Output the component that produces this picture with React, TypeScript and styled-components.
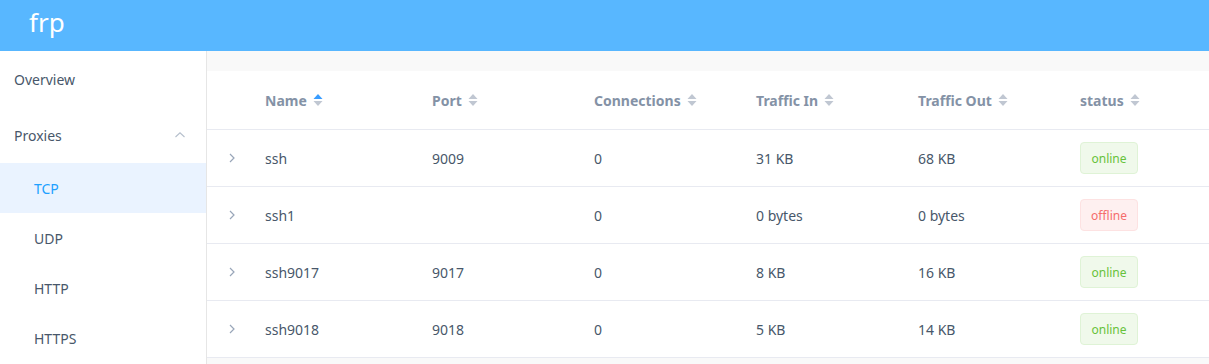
import styled, { createGlobalStyle } from "styled-components";

const GlobalStyle = createGlobalStyle`
  body {
    margin: 0;
    font-family: "Noto Sans", "Open Sans", sans-serif;
    background: #fff;
  }
`;

const Page = styled.div`
  width: 1209px;
  height: 364px;
  overflow: hidden;
  display: flex;
  flex-direction: column;
`;

const Header = styled.header`
  height: 51px;
  flex-shrink: 0;
  background: #58b7ff;
  display: flex;
  align-items: center;
  padding-left: 29px;
`;

const Logo = styled.span`
  color: #fff;
  font-size: 26px;
  line-height: 1;
  margin-top: -8px;
`;

const Body = styled.div`
  flex: 1;
  display: flex;
  min-height: 0;
`;

const Sidebar = styled.nav`
  width: 206px;
  flex-shrink: 0;
  border-right: 1px solid #e6e6e6;
  background: #fff;
`;

const MenuItem = styled.div<{ $sub?: boolean; $active?: boolean }>`
  height: ${(p) => (p.$sub ? "50px" : "56px")};
  display: flex;
  align-items: center;
  justify-content: space-between;
  padding: 0 20px 0 ${(p) => (p.$sub ? "34px" : "14px")};
  font-size: 14px;
  color: ${(p) => (p.$active ? "#20a0ff" : "#48576a")};
  background: ${(p) => (p.$active ? "#eaf3ff" : "transparent")};
`;

const Main = styled.main`
  flex: 1;
  background: #f9f9f9;
  padding-top: 20px;
`;

const Table = styled.div`
  background: #fff;
`;

const Row = styled.div<{ $head?: boolean }>`
  display: grid;
  grid-template-columns: 48px 167px 162px 162px 162px 162px 1fr;
  align-items: center;
  height: ${(p) => (p.$head ? "58px" : "56px")};
  border-bottom: 1px solid #e8eaf1;
  font-size: 14px;
  color: ${(p) => (p.$head ? "#8492a6" : "#48576a")};
  font-weight: ${(p) => (p.$head ? 700 : 400)};
`;

const Cell = styled.div`
  padding-left: 10px;
  display: flex;
  align-items: center;
  white-space: nowrap;
`;

const ExpandCell = styled.div`
  display: flex;
  justify-content: center;
  padding-left: 2px;
`;

const SortIcon = styled.span`
  display: inline-flex;
  margin-left: 6px;
`;

const Tag = styled.span<{ $online: boolean }>`
  display: inline-flex;
  align-items: center;
  justify-content: center;
  width: 58px;
  height: 32px;
  box-sizing: border-box;
  border-radius: 4px;
  font-size: 12px;
  border: 1px solid ${(p) => (p.$online ? "#dff3d6" : "#fde2e2")};
  background: ${(p) => (p.$online ? "#f0f9eb" : "#fef0f0")};
  color: ${(p) => (p.$online ? "#67c23a" : "#f56c6c")};
`;

function Sort({ active }: { active?: boolean }) {
  return (
    <SortIcon>
      <svg width="10" height="14" viewBox="0 0 10 14">
        <path d="M5 1 L9.5 6 L0.5 6 Z" fill={active ? "#3a9dff" : "#c0c7d2"} />
        <path d="M5 13 L9.5 8 L0.5 8 Z" fill="#c0c7d2" />
      </svg>
    </SortIcon>
  );
}

function Chevron() {
  return (
    <svg width="8" height="12" viewBox="0 0 8 12">
      <path d="M2 2 L6 6 L2 10" fill="none" stroke="#99a6b9" strokeWidth="1.2" />
    </svg>
  );
}

function ChevronUp() {
  return (
    <svg width="12" height="8" viewBox="0 0 12 8">
      <path d="M1.5 6 L6 1.8 L10.5 6" fill="none" stroke="#b5bfcc" strokeWidth="1.1" />
    </svg>
  );
}

const columns = ["Name", "Port", "Connections", "Traffic In", "Traffic Out", "status"];

const proxies = [
  { name: "ssh", port: "9009", conns: 0, inT: "31 KB", outT: "68 KB", online: true },
  { name: "ssh1", port: "", conns: 0, inT: "0 bytes", outT: "0 bytes", online: false },
  { name: "ssh9017", port: "9017", conns: 0, inT: "8 KB", outT: "16 KB", online: true },
  { name: "ssh9018", port: "9018", conns: 0, inT: "5 KB", outT: "14 KB", online: true },
];

export default function App() {
  return (
    <Page>
      <GlobalStyle />
      <Header>
        <Logo>frp</Logo>
      </Header>
      <Body>
        <Sidebar>
          <MenuItem>Overview</MenuItem>
          <MenuItem>
            Proxies
            <ChevronUp />
          </MenuItem>
          <MenuItem $sub $active>TCP</MenuItem>
          <MenuItem $sub>UDP</MenuItem>
          <MenuItem $sub>HTTP</MenuItem>
          <MenuItem $sub>HTTPS</MenuItem>
        </Sidebar>
        <Main>
          <Table>
            <Row $head>
              <div />
              {columns.map((c, i) => (
                <Cell key={c}>
                  {c}
                  <Sort active={i === 0} />
                </Cell>
              ))}
            </Row>
            {proxies.map((p) => (
              <Row key={p.name}>
                <ExpandCell>
                  <Chevron />
                </ExpandCell>
                <Cell>{p.name}</Cell>
                <Cell>{p.port}</Cell>
                <Cell>{p.conns}</Cell>
                <Cell>{p.inT}</Cell>
                <Cell>{p.outT}</Cell>
                <Cell>
                  <Tag $online={p.online}>{p.online ? "online" : "offline"}</Tag>
                </Cell>
              </Row>
            ))}
          </Table>
        </Main>
      </Body>
    </Page>
  );
}
